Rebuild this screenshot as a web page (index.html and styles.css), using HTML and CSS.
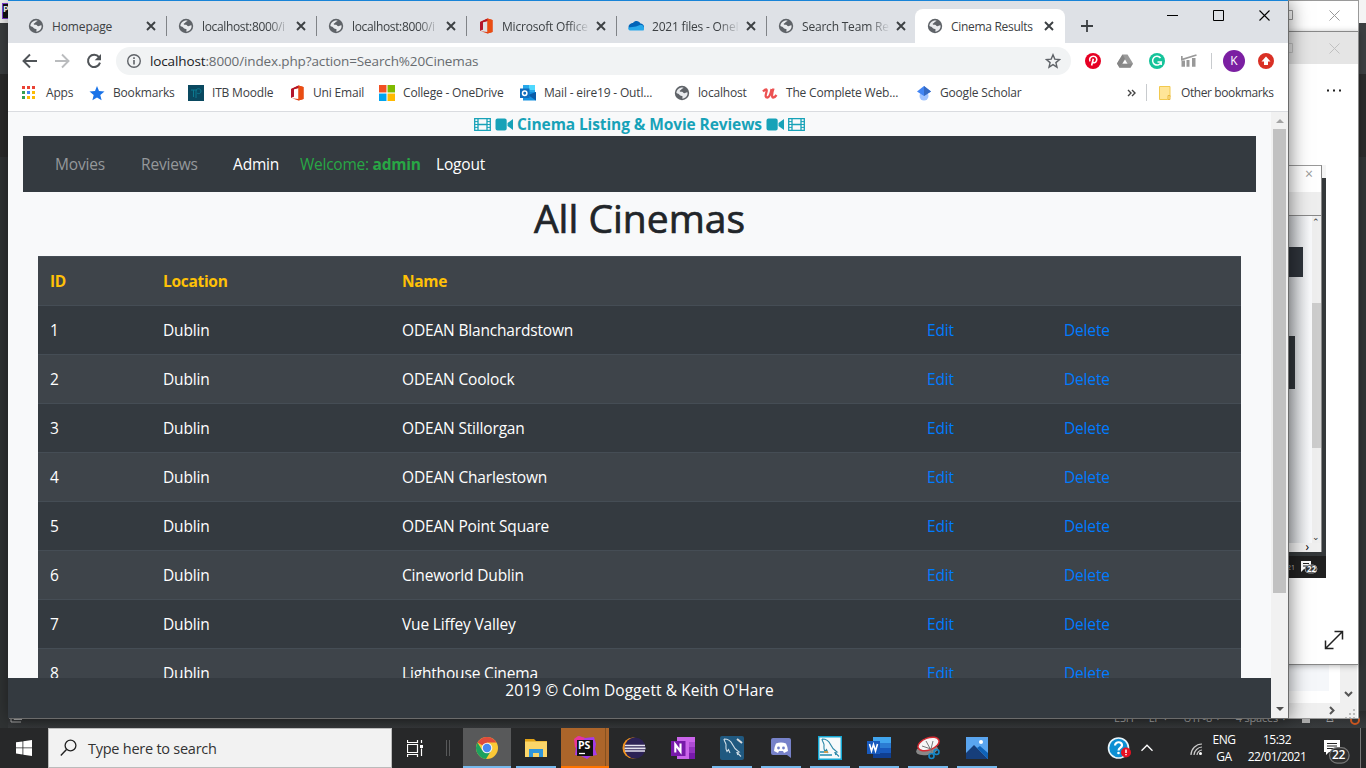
FILE: index.html
```html
<!DOCTYPE html>
<html lang="en">
<head>
<meta charset="utf-8">
<title>Cinema Results</title>
<link rel="stylesheet" href="styles.css">
</head>
<body>
<svg class="defs" width="0" height="0" aria-hidden="true">
  <symbol id="globe" viewBox="0 0 16 16"><circle cx="8" cy="8" r="7.2" fill="#5f6368"/><path d="M9.400 2.500c.2 1.200-1.900.9-2.100 2-.2.900-1.600.5-1.600 1.500 0 .9 1.300.6 2.300.8 1.100.2 1.100 1.400 2.300 1.500 1.200.1 1.600-1.200 3.200-.9.5 3.300-2 6-5.400 6.200.200-1 .9-1.400.3-2.300C7.800 10.400 6.300 11 5.600 9.900 5 8.800 3.800 8.600 2.400 8 2.400 4.800 5.500 1.900 9.400 2.500Z" fill="#e9ebee"/></symbol>
  <symbol id="close" viewBox="0 0 16 16"><path d="M4 4l8 8M12 4l-8 8" stroke="#3c4043" stroke-width="1.900" fill="none"/></symbol>
  <symbol id="office" viewBox="0 0 16 16"><path d="M2 4 9.500.5 14.500 2v12L9.500 15.500 3 13.200l6.500.8V3L5 4.200v7.300L2 12.800Z" fill="#dc3e15"/><path d="M2 4 9.500.5V3L5 4.200v7.300L2 12.800Z" fill="#b3152c"/><path d="M9.500.5 14.500 2v12l-5 1.500Z" fill="#ea4d12"/></symbol>
  <symbol id="film" viewBox="0 0 17 13"><path d="M.7.7h15.600v11.600H.7ZM4 .7v11.600M13 .7v11.600M4 6.500h9" fill="none" stroke="#17a2b8" stroke-width="1.300"/><path d="M.7 3.600H4M.7 6.500H4M.7 9.400H4M13 3.600h3.300M13 6.500h3.300M13 9.400h3.300" stroke="#17a2b8"/></symbol>
  <symbol id="video" viewBox="0 0 18 13"><path d="M2.500.5h7.200a2 2 0 0 1 2 2v8a2 2 0 0 1-2 2H2.500a2 2 0 0 1-2-2v-8a2 2 0 0 1 2-2ZM12.500 5 18 1v11l-5.500-4Z" fill="#17a2b8"/></symbol>
  <symbol id="dolphin" viewBox="0 0 24 24"><path d="M4 3c4 0 7 2 8.500 5.500 1.700 4 4 6 6.500 7.500l-2 .5 4 4M4 3c0 2 1.500 3 2 5.500.3 2-1 3.500 1 7l1.500-2L10 17M17 16.500l.8 2.500" fill="none" stroke="currentColor" stroke-width="1.100"/></symbol>
</svg>

<div class="desktop">
  <div class="ide"><div class="ide-title"></div><div class="ide-tools"></div><span class="ide-logo">P</span></div>
  <div class="ide-status"><svg class="stack" width="14" height="5"><path d="M2 0v4h10M5 0v1.500h8" stroke="#aaa" fill="none"/></svg><span>ESH</span><span>LF ÷</span><span>UTF-8 ÷</span><span>4 spaces ÷</span><i class="lock"></i><span>♙</span><b></b></div>

  <section class="window back">
    <div class="back-title">
      <svg width="10" height="10"><path d="M.5.5h9v9h-9Z" fill="none" stroke="#999"/></svg>
      <svg width="11" height="11"><path d="M.5.5l10 10M10.500.5l-10 10" stroke="#999"/></svg>
    </div>
    <div class="back-page"></div>
    <svg class="back-bars" width="70" height="54"><path d="M0 39h52V0h17v54H0Z" fill="#f0f0f0"/><path d="M57 28l3.500 3.500L64 28M42 43l3.500 3.500L42 50" fill="none" stroke="#555" stroke-width="2"/><path d="M65 45h2v2h-2zM61 49h2v2h-2zM65 49h2v2h-2zM57 53h2v1h-2zM61 53h2v1h-2zM65 53h2v1h-2z" fill="#bbb"/></svg>
  </section>

  <section class="window viewer">
    <div class="viewer-title">
      <svg width="10" height="10"><path d="M.5.5h9v9h-9Z" fill="none" stroke="#c2c2c2"/></svg>
      <svg width="11" height="11"><path d="M.5.5l10 10M10.500.5l-10 10" stroke="#c0c0c0"/></svg>
    </div>
    <svg class="dots" width="16" height="3"><path d="M1 .5h2v2H1ZM7 .5h2v2H7ZM13 .5h2v2h-2Z" fill="#222"/></svg>
    <div class="photo">
      <div class="photo-win">
        <div class="photo-title">×</div>
        <div class="photo-bar"></div>
        <div class="photo-main">
          <div class="photo-page"><div class="pp-nav"></div><div class="pp-table"></div></div>
          <div class="photo-scroll"><span>⌃</span><i></i><span>⌄</span></div>
        </div>
        <div class="photo-hbar">›</div>
      </div>
      <div class="photo-task"><span>21</span><svg width="18" height="14"><path d="M1 1h10v8H4l-3 3Z" fill="#fff"/><path d="M3 3.500h6M3 6h4" stroke="#222"/><rect x="5" y="5" width="12" height="8" rx="4" fill="#333" stroke="#999"/><text x="7" y="12" font-size="8" fill="#fff" font-family="Open Sans" font-weight="700">22</text></svg></div>
    </div>
    <svg class="expand" width="20" height="20"><path d="M2 18 18 2M10.500 1.500h8v8M1.500 10.500v8h8" fill="none" stroke="#222" stroke-width="1.500"/></svg>
  </section>

  <section class="window chrome">
    <div class="tabs">
      <div class="tab first"><svg><use href="#globe"/></svg><span>Homepage</span><svg><use href="#close"/></svg></div>
      <div class="tab"><svg><use href="#globe"/></svg><span class="fade tight">localhost:8000/i</span><svg><use href="#close"/></svg></div>
      <div class="tab"><svg><use href="#globe"/></svg><span class="fade tight">localhost:8000/i</span><svg><use href="#close"/></svg></div>
      <div class="tab"><svg><use href="#office"/></svg><span class="fade">Microsoft Office</span><svg><use href="#close"/></svg></div>
      <div class="tab"><svg viewBox="0 0 16 16"><path d="M1 10.500C-.5 7.500 2.500 5 5 5c2-3 6-2.500 7.500.5 3 0 4 3 3.500 5Z" fill="#0364b8"/><path d="M8 8.500l4.500-1.800c3 0 4.500 3 3 5.800H4C1 13-.5 11 .5 9.500Z" fill="#28a8ea"/></svg><span class="fade">2021 files - OneI</span><svg><use href="#close"/></svg></div>
      <div class="tab nosep"><svg><use href="#globe"/></svg><span class="fade">Search Team Re</span><svg><use href="#close"/></svg></div>
      <div class="tab active"><svg><use href="#globe"/></svg><span>Cinema Results</span><svg><use href="#close"/></svg></div>
      <svg class="newtab" viewBox="0 0 12 12"><path d="M6 0v12M0 6h12" stroke="#3c4043" stroke-width="1.800"/></svg>
      <div class="controls">
        <svg width="11" height="11"><path d="M0 5.500h11" stroke="#000"/></svg>
        <svg width="11" height="11"><path d="M.5.5h10v10H.5Z" fill="none" stroke="#000"/></svg>
        <svg width="11" height="11"><path d="M.5.5l10 10M10.500.5l-10 10" stroke="#000" stroke-width="1.100"/></svg>
      </div>
    </div>
    <div class="toolbar">
      <svg class="nav" viewBox="0 0 16 16"><path d="M15 8H2M8 1.500 1.500 8 8 14.500" fill="none" stroke="#505458" stroke-width="1.900"/></svg>
      <svg class="nav" viewBox="0 0 16 16"><path d="M1 8h13M8 1.500 14.500 8 8 14.500" fill="none" stroke="#babcbe" stroke-width="1.900"/></svg>
      <svg class="nav" viewBox="0 0 16 16"><path d="M13 4.200A6.100 6.100 0 1 0 14 9.600" fill="none" stroke="#505458" stroke-width="2"/><path d="M15 1v6.300H8.700Z" fill="#505458"/></svg>
      <div class="omnibox">
        <svg width="16" height="16" viewBox="0 0 16 16"><circle cx="8" cy="8" r="6.300" fill="none" stroke="#5f6368" stroke-width="1.400"/><path d="M8 7v4.500M8 4.300v1.600" stroke="#5f6368" stroke-width="1.600"/></svg>
        <span class="url"><b>localhost</b>:8000/index.php?action=Search%20Cinemas</span>
        <svg width="16" height="16" viewBox="0 0 16 16"><path d="M8 1.800l1.800 4.300 4.700.4-3.600 3.100 1.100 4.600L8 11.700l-4 2.500 1.100-4.600-3.600-3.100 4.700-.4Z" fill="none" stroke="#5f6368" stroke-width="1.400"/></svg>
      </div>
      <div class="exts">
        <svg viewBox="0 0 16 16"><circle cx="8" cy="8" r="8" fill="#e60023"/><path d="M6.600 12.500 8.300 5.800M5 8.300C3.500 5.500 6 3.300 8.300 3.300c3 0 4 2.500 3.200 4.500-.9 2.500-3.200 2.300-3.800 1.200" fill="none" stroke="#fff" stroke-width="1.600"/></svg>
        <svg viewBox="0 0 16 16"><path d="M5.500 1.500h5L16 10.500l-2.500 4.300h-11L0 10.500Z" fill="#9a9a9a"/><path d="M5.500 1.500 0 10.500l2.500 4.300L8 5.700Z" fill="#858585"/><path d="M8 6.500l2.600 4.200H5.400Z" fill="#fff"/><path d="M5.400 10.700H16l-2.500 4.100h-11Z" fill="#777" opacity=".45"/></svg>
        <svg viewBox="0 0 16 16"><circle cx="8" cy="8" r="8" fill="#15c39a"/><path d="M11.500 5A4.400 4.400 0 1 0 12.200 9H8.500M12.200 8.500V12" fill="none" stroke="#fff" stroke-width="1.500"/></svg>
        <svg viewBox="0 0 16 16"><path d="M.5 7.500H4v6.300H.5ZM5.500 7H8.500v6.800H5.500ZM11 5H14.500v8.800H11Z" fill="#999"/><path d="M.8 3v3.500L15.500 2" fill="none" stroke="#999" stroke-width="1.700"/></svg>
        <i></i>
        <b class="avatar">K</b>
        <svg viewBox="0 0 16 16"><circle cx="8" cy="8" r="8" fill="#d93025"/><path d="M8 3.500 12.500 8.500H10v3.500H6V8.500H3.500Z" fill="#fff"/></svg>
      </div>
    </div>
    <div class="bookmarks">
      <div class="bm"><svg viewBox="0 0 14 14"><path d="M0 0h3v3H0zM5 0h3v3H5zM10 0h3v3h-3z" fill="#ea4335"/><path d="M0 5h3v3H0zM0 10h3v3H0z" fill="#34a053"/><path d="M5 5h3v3H5z" fill="#4285f4"/><path d="M10 5h3v3h-3zM5 10h3v3H5zM10 10h3v3h-3z" fill="#fbbc05"/></svg><span>Apps</span></div>
      <div class="bm"><svg viewBox="0 0 16 16"><path d="M8 1l2 5 5.500.4-4.200 3.500 1.300 5.300L8 12.400l-4.600 2.800 1.300-5.300L.5 6.400 6 6Z" fill="#1a73e8"/></svg><span>Bookmarks</span></div>
      <div class="bm"><svg viewBox="0 0 16 16"><path d="M0 0h16v16H0Z" fill="#0a4960"/><path d="M3 5h6M5.500 5v7M8 13V6c0-3 5-3 5 0s-3 3-4 2" fill="none" stroke="#0b7a91"/></svg><span>ITB Moodle</span></div>
      <div class="bm"><svg><use href="#office"/></svg><span>Uni Email</span></div>
      <div class="bm"><svg viewBox="0 0 15 15"><path d="M0 0h7v7H0Z" fill="#f25022"/><path d="M8 0h7v7H8Z" fill="#7fba00"/><path d="M0 8h7v7H0Z" fill="#00a4ef"/><path d="M8 8h7v7H8Z" fill="#ffb900"/></svg><span>College - OneDrive</span></div>
      <div class="bm"><svg viewBox="0 0 16 16"><path d="M3 0h12v7H3Z" fill="#28a8ea"/><path d="M9 0h6v5H9Z" fill="#50d9ff"/><path d="M3 7h13v8.500H3Z" fill="#1490df"/><path d="M16 7v8.500L8 10Z" fill="#0a5ca8"/><path d="M0 3.500h9.500V13H0Z" fill="#0f6cbd"/><circle cx="4.700" cy="8.200" r="2.200" fill="none" stroke="#fff" stroke-width="1.500"/></svg><span>Mail - eire19 - Outl...</span></div>
      <div class="bm"><svg><use href="#globe"/></svg><span>localhost</span></div>
      <div class="bm"><svg viewBox="0 0 16 16"><path d="M1 6.500C4 3.500 5.500 3.500 4.300 7.500S3.500 12.500 5.500 12.500 8.700 8.500 9.600 4M11.500 3.500C10 8 9.300 12.500 11.300 12.500c1.200 0 2.200-1 3.200-2.500" fill="none" stroke="#ec5252" stroke-width="2.300"/></svg><span>The Complete Web...</span></div>
      <div class="bm"><svg viewBox="0 0 16 16"><circle cx="8" cy="11" r="4.500" fill="#a0c3ff"/><path d="M1 6.500 8 1l7 5.500L8 11Z" fill="#4285f4"/><path d="M8 1l7 5.500L8 11Z" fill="#356ac3"/></svg><span>Google Scholar</span></div>
      <div class="bm more"><svg width="9" height="8"><path d="M1 1l3 3-3 3M5 1l3 3-3 3" fill="none" stroke="#444" stroke-width="1.400"/></svg></div>
      <div class="bm other"><svg viewBox="0 0 12 14"><path d="M.5.5h10.500v10L8.500 13.500H.5Z" fill="#ffe598" stroke="#f2c94e"/><path d="M9 13.500v-4h2v4Z" fill="#ffe598" stroke="#e9b83f"/></svg><span>Other bookmarks</span></div>
    </div>

    <div class="view">
      <div class="page">
        <div class="content">
          <header class="brand"><svg class="film"><use href="#film"/></svg><svg class="video"><use href="#video"/></svg><b>Cinema Listing &amp; Movie Reviews</b><svg class="video"><use href="#video"/></svg><svg class="film"><use href="#film"/></svg></header>
          <nav class="navbar">
            <a>Movies</a><a>Reviews</a><a class="lit">Admin</a><span class="welcome">Welcome: <b>admin</b></span><a class="lit">Logout</a>
          </nav>
          <h1><span>All Cinemas</span></h1>
          <table class="cinemas">
            <colgroup><col class="c1"><col class="c2"><col class="c3"><col class="c4"><col class="c5"></colgroup>
            <tr><th>ID</th><th>Location</th><th>Name</th><th></th><th></th></tr>
            <tr><td>1</td><td>Dublin</td><td>ODEAN Blanchardstown</td><td><a>Edit</a></td><td><a>Delete</a></td></tr>
            <tr><td>2</td><td>Dublin</td><td>ODEAN Coolock</td><td><a>Edit</a></td><td><a>Delete</a></td></tr>
            <tr><td>3</td><td>Dublin</td><td>ODEAN Stillorgan</td><td><a>Edit</a></td><td><a>Delete</a></td></tr>
            <tr><td>4</td><td>Dublin</td><td>ODEAN Charlestown</td><td><a>Edit</a></td><td><a>Delete</a></td></tr>
            <tr><td>5</td><td>Dublin</td><td>ODEAN Point Square</td><td><a>Edit</a></td><td><a>Delete</a></td></tr>
            <tr><td>6</td><td>Dublin</td><td>Cineworld Dublin</td><td><a>Edit</a></td><td><a>Delete</a></td></tr>
            <tr><td>7</td><td>Dublin</td><td>Vue Liffey Valley</td><td><a>Edit</a></td><td><a>Delete</a></td></tr>
            <tr><td>8</td><td>Dublin</td><td>Lighthouse Cinema</td><td><a>Edit</a></td><td><a>Delete</a></td></tr>
          </table>
        </div>
        <footer>2019 © Colm Doggett &amp; Keith O'Hare</footer>
      </div>
      <div class="scrollbar">
        <svg width="17" height="17"><path d="M5 11h8L9 7Z" fill="#a3a3a3"/></svg>
        <i></i>
        <svg class="down" width="17" height="17"><path d="M5 6h8l-4 4Z" fill="#505050"/></svg>
      </div>
    </div>
  </section>

  <div class="taskbar">
    <div class="start"><svg width="16" height="16"><path d="M0 2.300 6.500 1.400v6.100H0ZM7.300 1.300 16 0v7.500H7.300ZM0 8.300h6.500v6.200L0 13.600ZM7.300 8.300H16V16l-8.700-1.300Z" fill="#fff"/></svg></div>
    <div class="search"><svg width="18" height="18"><circle cx="10.500" cy="6.500" r="5.400" fill="none" stroke="#222" stroke-width="1.300"/><path d="M6.500 10.500.8 16.500" stroke="#222" stroke-width="1.400"/></svg><span>Type here to search</span></div>
    <div class="taskview"><svg width="17" height="17"><path d="M.5 0v2.500h10V0M.5 17v-2.500h10V17M.5 4.500h10v8H.5ZM14.500 0v3M14.500 8.500V16" fill="none" stroke="#fff" stroke-width="1.200"/><path d="M13 5h3v3h-3Z" fill="#fff"/></svg></div>
    <div class="grip"></div>
    <div class="apps">
      <div class="app current"><svg viewBox="0 0 24 24"><circle cx="12" cy="12" r="11" fill="#fbc836"/><path d="M12 12 2.500 6.500A11 11 0 0 1 21.500 6.500H12Z" fill="#de4b3c"/><path d="M2.500 6.500A11 11 0 0 0 11 23l5.500-9L7 14Z" fill="#1da15f"/><circle cx="12" cy="12" r="5.300" fill="#f3f3f3"/><circle cx="12" cy="12" r="4.200" fill="#4688f1"/></svg></div>
      <div class="app open"><svg viewBox="0 0 24 24"><path d="M1 3h9l2 2h11v16H1Z" fill="#e1a215"/><path d="M1 5.500h22V21H1Z" fill="#fbd669"/><path d="M5 21v-8h14v8h-4v-4H9v4Z" fill="#2f96db"/></svg></div>
      <div class="app ps"><svg viewBox="0 0 24 24"><path d="M2 3l4-3 6 2 9-1 2 7-1 5 2 6-6 1-4 3-6-3-6-1 1-8Z" fill="#a63be8"/><path d="M1 3 5 0l7 2-6 7-4 3Z" fill="#e9369a"/><path d="M4 4h16v16H4Z" fill="#111"/><path d="M6 17.500h6" stroke="#fff" stroke-width="1.300"/><text x="5" y="12.700" class="ps-text">PS</text></svg></div>
      <div class="app"><svg viewBox="0 0 24 24"><circle cx="11" cy="12" r="10.500" fill="#f39421"/><circle cx="13" cy="12" r="10.500" fill="#2c2255"/><path d="M3 9.500h20M2.500 12.300h21M3 15h20" stroke="#e5e3ef" stroke-width="1.700"/></svg></div>
      <div class="app"><svg viewBox="0 0 24 24"><path d="M6 1h18v22H6Z" fill="#ca64ea"/><path d="M18 6h6v5h-6Z" fill="#ae4bd5"/><path d="M18 11h6v6h-6Z" fill="#9332bf"/><path d="M18 17h6v6h-6Z" fill="#7719aa"/><path d="M0 5h14.500v15H0Z" fill="#7719aa"/><path d="M4.300 16.500V8.500l5.200 7V7.500" fill="none" stroke="#fff" stroke-width="2.100"/></svg></div>
      <div class="app open workbench"><svg viewBox="0 0 24 24"><rect width="24" height="24" rx="2" fill="#205980"/><use href="#dolphin"/><path d="M17 3l5 4" stroke="#ddd" stroke-width="2"/></svg></div>
      <div class="app open"><svg viewBox="0 0 24 24"><path d="M4 2h16q2 0 2 2v18l-4-3H4q-2 0-2-2V4q0-2 2-2Z" fill="#7782c9"/><path d="M7 7.500q5-2 10 0 2 4 2 7.500l-4 2-1-2h-4l-1 2-4-2q0-3.500 2-7.500Z" fill="#fff"/><circle cx="9.500" cy="12" r="1.400" fill="#7280c7"/><circle cx="14.500" cy="12" r="1.400" fill="#7280c7"/></svg></div>
      <div class="app open installer"><svg viewBox="0 0 24 24"><path d="M.7.7h22.600v22.600H.7Z" fill="#f6fafb" stroke="#15a7d3" stroke-width="1.500"/><use href="#dolphin"/><path d="M2 16h7M2 19h12" stroke="#258cb0" stroke-width="1.500"/><path d="M6 16h4" stroke="#f29b2e" stroke-width="1.500"/></svg></div>
      <div class="app open"><svg viewBox="0 0 24 24"><path d="M6 1h18v6H6Z" fill="#41a5ee"/><path d="M6 7h18v5H6Z" fill="#2b7cd3"/><path d="M6 12h18v5H6Z" fill="#185abd"/><path d="M6 17h18v5H6Z" fill="#103f91"/><path d="M0 5h13v13H0Z" fill="#185abd"/><path d="M2.500 8 4.500 15l2-6.500 2 6.500 2-7" fill="none" stroke="#fff" stroke-width="1.600"/></svg></div>
      <div class="app open"><svg viewBox="0 0 24 24"><ellipse cx="11" cy="14" rx="11" ry="5" transform="rotate(-10 11 14)" fill="#888"/><ellipse cx="12.500" cy="8" rx="11" ry="6" transform="rotate(-20 12.500 8)" fill="#f6f6f6" stroke="#d52b32" stroke-width="1.500"/><path d="M10 5l6 11M17 5l-2 8-9-3" stroke="#777" fill="none"/><circle cx="15.500" cy="20" r="2.500" fill="none" stroke="#1688c9" stroke-width="1.600"/><circle cx="20.500" cy="16" r="2.500" fill="none" stroke="#1688c9" stroke-width="1.600"/></svg></div>
      <div class="app open"><svg viewBox="0 0 24 24"><path d="M1 1h22v22H1Z" fill="#5aa5ef"/><path d="M1 17 9 9l14 14H1Z" fill="#163e7a"/><path d="M12 12l3-2 8 7v6Z" fill="#0e62b8"/><circle cx="16" cy="6" r="2" fill="#fff"/></svg></div>
    </div>
    <div class="tray">
      <svg class="help" width="25" height="24"><circle cx="11.500" cy="12" r="10" fill="#0c8fd3" stroke="#e9f5fb" stroke-width="1.600"/><path d="M8 9.500C8 5 15.500 5.300 15 9.500c-.3 2.300-3.300 2-3.500 5" fill="none" stroke="#fff" stroke-width="2.200"/><circle cx="11.500" cy="17" r="1.300" fill="#fff"/><circle cx="19" cy="16.500" r="5" fill="#e81123"/><path d="M19 13.500V17M19 18v1.300" stroke="#fff" stroke-width="1.500"/></svg>
      <svg class="chev" width="12" height="8"><path d="M.5 6.800 6 1.200l5.500 5.600" fill="none" stroke="#fff" stroke-width="1.300"/></svg>
      <svg class="wifi" width="13" height="13"><path d="M1 12C1 6 6 1 12 1M4 12c0-4 4-8 8-8M7 12c0-2.500 2.500-5 5-5" fill="none" stroke="#ccc" stroke-width="1.200"/><circle cx="10.500" cy="10.500" r="1.500" fill="#fff"/></svg>
      <div class="lang"><span>ENG</span><span>GA</span></div>
      <div class="clock"><span>15:32</span><span>22/01/2021</span></div>
      <div class="notif"><svg width="27" height="26"><path d="M1 1h16v12H6l-3 3v-3H1Z" fill="#fff"/><path d="M4 4.500h10M4 7h10M4 9.500h6" stroke="#262626" stroke-width="1.100"/><rect x="6.600" y="8.600" width="19.500" height="15.500" rx="7.700" fill="#303030" stroke="#777" stroke-width="1.200"/></svg><b>22</b></div>
    </div>
  </div>
</div>
</body>
</html>
```

FILE: styles.css
```css
* { box-sizing: border-box; }
body { margin: 0; font-family: "Open Sans", "Noto Sans", sans-serif; overflow: hidden; }
svg { display: block; flex: none; }
.defs { position: absolute; }
.desktop { position: relative; width: 1366px; height: 768px; background: #303334; overflow: hidden; }

/* editor behind every window */
.ide { position: absolute; inset: 0; }
.ide-title { height: 23px; background: #f4f4f4; }
.ide-tools { height: 134px; background: linear-gradient(#3c3f41 0 51px, #2b2b2b 51px); }
.ide-logo { position: absolute; left: 2px; top: 3px; width: 16px; height: 16px; background: #111; border: 1px solid #7f3fd0; color: #fff; font-size: 9px; line-height: 9px; font-weight: 700; }
.ide-status { position: absolute; left: 8px; right: 0; top: 711px; height: 17px; background: linear-gradient(#292b2c, #383b3d); color: #aaa; font-size: 11px; line-height: 14px; display: flex; gap: 15px; padding-left: 1106px; padding-right: 3px; letter-spacing: -.2px; white-space: nowrap; }
.ide-status .stack { position: absolute; left: 1px; top: 7px; }
.lock { width: 8px; height: 12px; background: #aaa; }
.ide-status b { width: 10px; height: 10px; margin-top: 4px; border: 2px solid #c8551f; border-radius: 50%; }

.window { position: absolute; overflow: hidden; }
.back { left: 300px; top: 0; width: 1059px; height: 719px; background: #fff; border: 1px solid #9a9a9a; }
.back-title, .viewer-title { display: flex; justify-content: flex-end; align-items: center; gap: 36px; height: 28px; padding-right: 18px; }
.back-page { position: absolute; left: 900px; top: 660px; width: 128px; height: 30px; background: #f5f7fa; }
.back-bars { position: absolute; right: 0; bottom: 0; }
.viewer { left: 300px; top: 31px; width: 1059px; height: 634px; background: #fff; border: 1px solid #888; box-shadow: 0 1px 6px rgba(0,0,0,.3); }
.viewer-title { height: 32px; background: #e5e5e5; }
.dots { margin: 25px 16px 0 auto; }
.expand { position: absolute; right: 14px; bottom: 14px; }
.photo { position: absolute; right: 32px; top: 133px; width: 200px; height: 413px; background: linear-gradient(#f5f5f5 13px, #34383a 13px); }
.photo-win { width: 196px; height: 387px; background: #fff; border-top: 1px solid #999; border-right: 1px solid #888; display: flex; flex-direction: column; }
.photo-title { height: 26px; text-align: right; padding-right: 8px; font-size: 14px; line-height: 16px; color: #999; }
.photo-bar { height: 24px; background: #eee; border-bottom: 1px solid #888; }
.photo-main { flex: 1; display: flex; }
.photo-page { flex: 1; background: linear-gradient(90deg, #b9bcc0 155px, #f7f8fa 184px); }
.pp-nav { margin-top: 31px; width: 177px; height: 30px; background: #2e333a; }
.pp-table { margin-top: 59px; width: 169px; height: 53px; background: #30353a; }
.photo-scroll { width: 9px; background: #eee; display: flex; flex-direction: column; font-size: 9px; line-height: 12px; color: #333; }
.photo-scroll i { margin: 75px 0 auto; height: 145px; background: #ccc; }
.photo-hbar { height: 9px; background: #f0f0f0; text-align: right; padding-right: 12px; font-size: 12px; line-height: 7px; }
.photo-task { height: 22px; margin-top: 4px; background: #202020; display: flex; justify-content: flex-end; align-items: center; gap: 5px; padding-right: 8px; color: #bbb; font-size: 7px; }

/* browser window */
.chrome { left: 8px; top: 0; width: 1280px; height: 718px; border-top: 1px solid #1883d7; background: #fff; display: flex; flex-direction: column; overflow: visible; box-shadow: 1px 1px 0 #6b6b6b, 2px 2px 18px rgba(0,0,0,.5); }
.tabs { display: flex; align-items: flex-end; height: 42px; background: #dee1e6; padding-left: 8px; }
.tab { position: relative; width: 150px; height: 34px; display: flex; align-items: center; padding: 0 7px 0 12px; font-size: 12px; color: #3c4043; }
.tab svg { width: 16px; height: 16px; }
.tab span { width: 88px; margin: 0 3px 0 8px; white-space: nowrap; letter-spacing: -.12px; }
.tab .fade { -webkit-mask-image: linear-gradient(90deg, #000 66px, transparent 88px); mask-image: linear-gradient(90deg, #000 66px, transparent 88px); letter-spacing: -.2px; }
.tab .tight { letter-spacing: -.35px; }
.tab:not(.active):not(.nosep)::after { content: ""; position: absolute; right: -1px; top: 7px; width: 1px; height: 20px; background: #808387; }
.nosep { width: 149px; padding-right: 6px; }
.active { background: #fff; border-radius: 8px 8px 0 0; padding-right: 8px; }
.active svg:last-child { margin-left: -1px; }
.tab.active span { letter-spacing: -.3px; }
.newtab { width: 12px; height: 12px; margin: 0 auto 11px 16px; }
.controls { display: flex; gap: 35px; align-self: flex-start; padding: 9px 18px 0 0; }
.toolbar { display: flex; align-items: center; height: 36px; }
.nav { width: 16px; height: 16px; margin-left: 14px; }
.nav + .nav { margin-left: 16px; }
.omnibox { width: 955px; height: 28px; margin-left: 14px; background: #f1f3f4; border-radius: 14px; display: flex; align-items: center; padding: 0 10px; }
.url { flex: 1; margin-left: 8px; font-size: 13.500px; letter-spacing: -.13px; color: #686c70; white-space: nowrap; }
.url b { color: #202124; font-weight: 400; }
.exts { display: flex; align-items: center; padding-left: 14px; gap: 16px; }
.exts svg { width: 16px; height: 16px; }
.exts i { width: 1px; height: 16px; background: #c8cbce; margin: 0 -5px 0 -2px; }
.avatar { width: 22px; height: 22px; border-radius: 50%; background: #7b1fa2; color: #fff; font-weight: 400; font-size: 12px; line-height: 22px; text-align: center; margin: 0 -3px 0 0; }
.bookmarks { display: grid; grid-template-columns: 67px 99px 101px 90px 141px 154px 88px 154px 203px 32px 1fr; height: 33px; padding: 0 0 5px 14px; border-bottom: 1px solid #dadce0; align-items: center; }
.bm { display: flex; align-items: center; gap: 8px; font-size: 12px; letter-spacing: -.18px; color: #3c4043; white-space: nowrap; }
.bm svg { width: 16px; height: 16px; }
.bm:first-child svg { width: 14px; height: 14px; margin-right: 2px; }
.bm.more svg { width: 9px; height: 8px; margin-left: 8px; }
.bm.other svg { width: 12px; height: 14px; margin: 0 2px 0 -1px; }
.bm.other { border-left: 1px solid #c8cbce; padding-left: 13px; margin-left: -5px; letter-spacing: -.4px; }

.view { flex: 1; display: flex; min-height: 0; }
.page { width: 1263px; display: flex; flex-direction: column; background: #f8f9fa; font-size: 15.500px; letter-spacing: -.17px; }
.content { flex: 1; min-height: 0; overflow: hidden; padding: 0 15px; }
.brand { height: 24px; display: flex; justify-content: center; align-items: center; gap: 4px; color: #17a2b8; letter-spacing: -.1px; }
.brand svg { width: 17px; height: 13px; }
.brand .video { width: 18px; }
.navbar { display: flex; align-items: center; height: 56px; background: #343a40; padding-left: 32px; }
.navbar a { color: #95989b; width: 92px; }
.navbar a:first-child { width: 86px; }
.navbar .lit { color: #fff; width: 67px; }
.welcome { color: #28a745; width: 136px; white-space: nowrap; letter-spacing: -.25px; }
h1 { margin: 0; height: 64px; font-size: 39px; line-height: 51px; font-weight: 500; -webkit-text-stroke: .7px #212529; letter-spacing: 0; text-align: center; color: #212529; }
.cinemas { width: 1203px; margin: 0 15px; border-collapse: separate; border-spacing: 0; table-layout: fixed; color: #fff; background: #343a40; line-height: 24px; }
.c1 { width: 113px; } .c2 { width: 239px; } .c3 { width: 525px; } .c4 { width: 137px; } .c5 { width: 189px; }
.cinemas th, .cinemas td { height: 49px; padding: 12px; border-top: 1px solid #454d55; text-align: left; vertical-align: top; }
.cinemas th { color: #ffc107; letter-spacing: -.3px; }
.cinemas tr:nth-child(odd) { background: #3e444a; }
.cinemas a { color: #007bff; }
footer { flex: none; height: 40px; background: #343a40; color: #fff; text-align: center; line-height: 25px; letter-spacing: .07px; }
.scrollbar { width: 17px; background: #f1f1f1; display: flex; flex-direction: column; }
.scrollbar i { height: 464px; margin: 0 2px auto; background: #c1c1c1; }

/* taskbar */
.taskbar { position: absolute; left: 0; right: 0; bottom: 0; height: 40px; background: #272829; display: flex; align-items: center; color: #fff; }
.start { width: 48px; padding-left: 16px; }
.search { width: 344px; height: 40px; background: #f2f2f2; border: 1px solid #bbb; color: #333; display: flex; align-items: center; gap: 10px; padding-left: 11px; font-size: 14.500px; letter-spacing: -.25px; }
.taskview { padding-left: 15px; }
.grip { margin-left: 22px; width: 4px; height: 16px; border: solid #58595a; border-width: 0 1px; }
.apps { display: flex; gap: 1px; margin-left: 13px; }
.app { width: 48px; height: 40px; padding: 8px 12px 0; position: relative; }
.app svg { width: 24px; height: 24px; }
.open::after { content: ""; position: absolute; left: 4px; right: 4px; bottom: 0; height: 2px; background: #76b9ed; }
.current { background: #58595a; border-bottom: 2px solid #76b9ed; }
.ps { background: linear-gradient(90deg, #ac652a 44px, #85501f 44px 45px, #ac652a 45px); border-bottom: 2px solid #ff7400; }
.ps-text { font: 700 10.500px "Open Sans", sans-serif; fill: #fff; }
.workbench { color: #cfdde6; }
.installer { color: #2b88a8; }
.tray { flex: 1; display: flex; align-items: center; height: 40px; margin-left: 106px; font-size: 12px; line-height: 17px; letter-spacing: -.4px; }
.chev { margin-left: 9px; }
.wifi { margin-left: 37px; margin-top: 3px; }
.lang, .clock { display: flex; flex-direction: column; align-items: center; }
.lang { width: 26px; margin-left: 8px; }
.clock { width: 64px; margin-left: 8px; letter-spacing: -.5px; }
.notif { position: relative; margin-left: 14px; width: 38px; height: 40px; padding-top: 11px; border-right: 1px solid #777; }
.notif b { position: absolute; left: 9px; top: 18px; font-size: 12px; line-height: 18px; font-weight: 600; }
```
